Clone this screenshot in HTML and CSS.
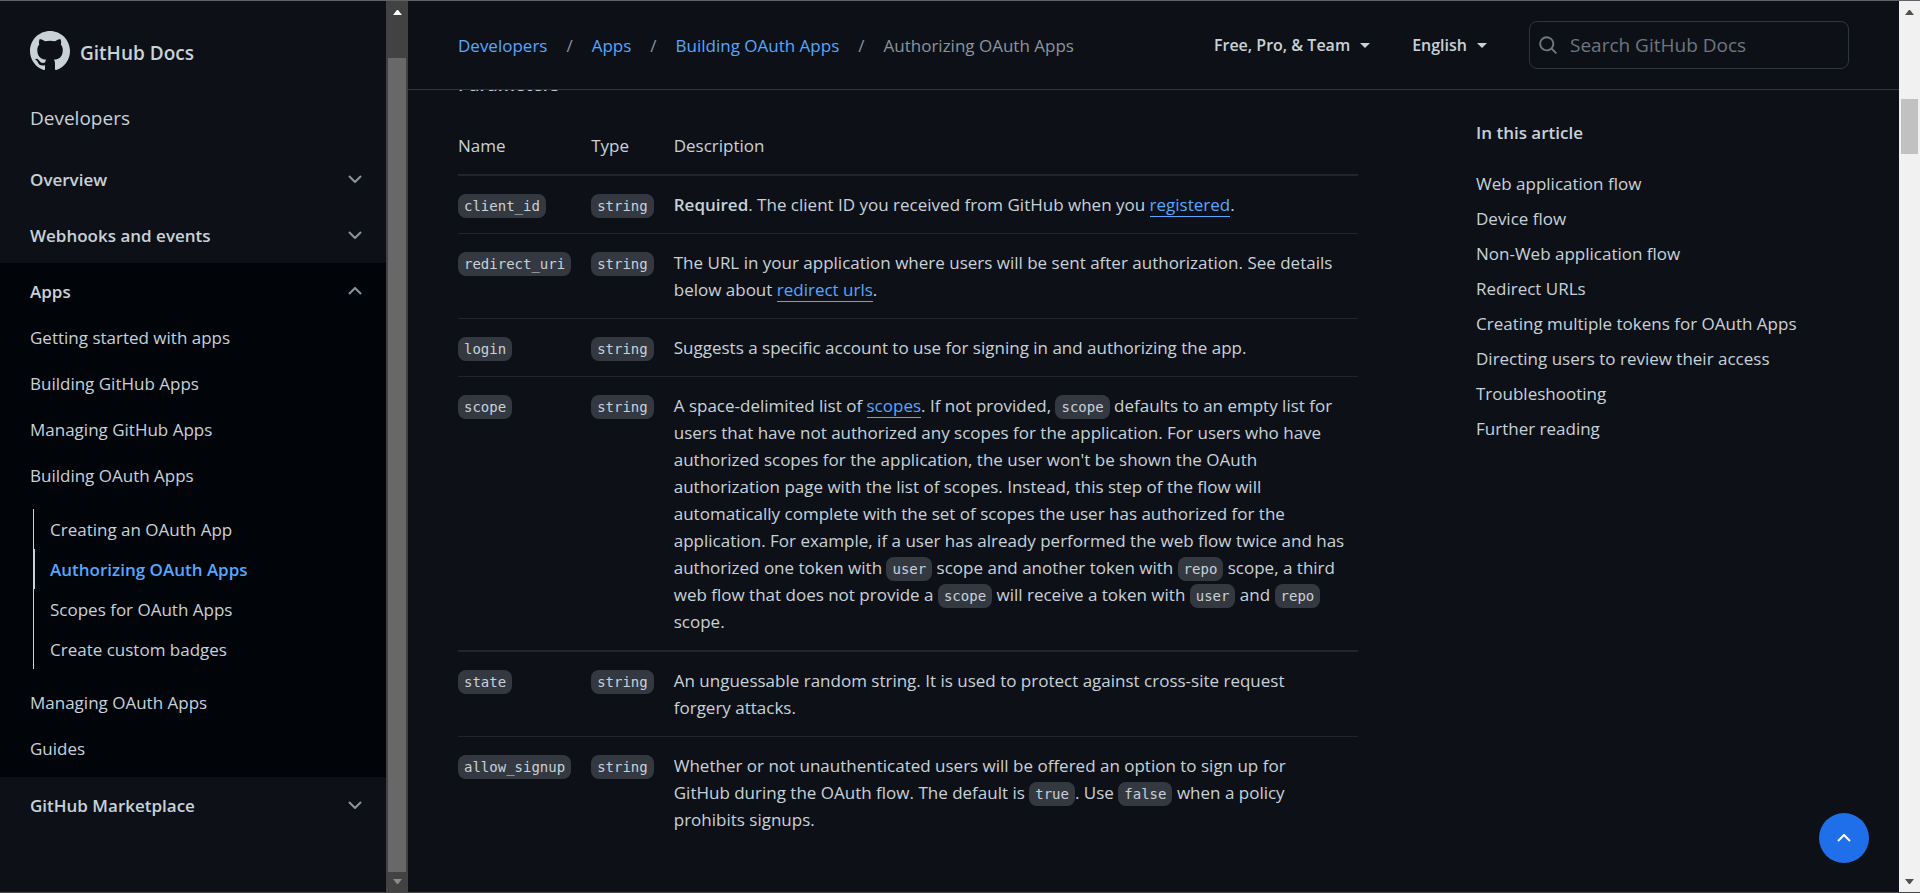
FILE: index.html
```html
<!DOCTYPE html>
<html lang="en">
<head>
<meta charset="utf-8">
<title>Authorizing OAuth Apps - GitHub Docs</title>
<link rel="stylesheet" href="styles.css">
</head>
<body>
<div class="app">
  <nav class="sidebar" aria-label="Docs">
    <a class="brand" href="#">
      <svg class="brand-mark" viewBox="0 0 16 16" aria-hidden="true"><path fill="currentColor" fill-rule="evenodd" d="M8 0C3.58 0 0 3.58 0 8c0 3.54 2.29 6.53 5.47 7.59.4.07.55-.17.55-.38 0-.19-.01-.82-.01-1.49-2.01.37-2.53-.49-2.69-.94-.09-.23-.48-.94-.82-1.13-.28-.15-.68-.52-.01-.53.63-.01 1.08.58 1.23.82.72 1.21 1.87.87 2.33.66.07-.52.28-.87.51-1.07-1.78-.2-3.64-.89-3.64-3.95 0-.87.31-1.59.82-2.15-.08-.2-.36-1.02.08-2.12 0 0 .67-.21 2.2.82.64-.18 1.32-.27 2-.27.68 0 1.36.09 2 .27 1.53-1.04 2.2-.82 2.2-.82.44 1.1.16 1.92.08 2.12.51.56.82 1.27.82 2.15 0 3.07-1.87 3.75-3.65 3.95.29.25.54.73.54 1.48 0 1.07-.01 1.93-.01 2.2 0 .21.15.46.55.38A8.013 8.013 0 0016 8c0-4.42-3.58-8-8-8z"/></svg>
      <span class="brand-name">GitHub Docs</span>
    </a>
    <a class="product" href="#">Developers</a>
    <button class="section" type="button" aria-expanded="false">Overview
      <svg class="chevron" viewBox="0 0 14 8" aria-hidden="true"><path d="M1 1l6 6 6-6"/></svg></button>
    <button class="section" type="button" aria-expanded="false">Webhooks and events
      <svg class="chevron" viewBox="0 0 14 8" aria-hidden="true"><path d="M1 1l6 6 6-6"/></svg></button>
    <div class="open-section">
      <button class="section" type="button" aria-expanded="true">Apps
        <svg class="chevron" viewBox="0 0 14 8" aria-hidden="true"><path d="M1 7l6-6 6 6"/></svg></button>
      <ul class="topics">
        <li><a href="#">Getting started with apps</a></li>
        <li><a href="#">Building GitHub Apps</a></li>
        <li><a href="#">Managing GitHub Apps</a></li>
        <li><a href="#">Building OAuth Apps</a>
          <ul class="articles">
            <li><a href="#">Creating an OAuth App</a></li>
            <li><a class="current" href="#" aria-current="page">Authorizing OAuth Apps</a></li>
            <li><a href="#">Scopes for OAuth Apps</a></li>
            <li><a href="#">Create custom badges</a></li>
          </ul>
        </li>
        <li><a href="#">Managing OAuth Apps</a></li>
        <li><a href="#">Guides</a></li>
      </ul>
    </div>
    <button class="section" type="button" aria-expanded="false">GitHub Marketplace
      <svg class="chevron" viewBox="0 0 14 8" aria-hidden="true"><path d="M1 1l6 6 6-6"/></svg></button>
  </nav>
  <div class="scrollbar scrollbar-dark" aria-hidden="true">
    <svg class="arrow" viewBox="0 0 9 5"><path d="M0 5h9L5 0H4z"/></svg>
    <div class="track"><div class="thumb"></div></div>
    <svg class="arrow arrow-end" viewBox="0 0 9 5"><path d="M0 0h9L5 5H4z"/></svg>
  </div>

  <div class="page">
    <header class="topbar">
      <ol class="crumbs">
        <li><a href="#">Developers</a></li>
        <li><a href="#">Apps</a></li>
        <li><a href="#">Building OAuth Apps</a></li>
        <li><a class="here" href="#">Authorizing OAuth Apps</a></li>
      </ol>
      <div class="tools">
        <button class="picker" type="button">Free, Pro, &amp; Team <span class="caret"></span></button>
        <button class="picker" type="button">English <span class="caret"></span></button>
        <label class="search">
          <svg class="search-icon" viewBox="0 0 16 16" aria-hidden="true"><path fill="currentColor" fill-rule="evenodd" d="M11.5 7a4.5 4.5 0 11-9 0 4.5 4.5 0 019 0zm-.82 4.74a6 6 0 111.06-1.06l3.04 3.04a.75.75 0 11-1.06 1.06l-3.04-3.04z"/></svg>
          <input type="search" placeholder="Search GitHub Docs" aria-label="Search GitHub Docs">
        </label>
      </div>
    </header>
    <div class="content">
      <main class="article">
        <h4 class="heading">Parameters</h4>
        <table class="params">
          <thead><tr><th>Name</th><th>Type</th><th>Description</th></tr></thead>
          <tbody>
            <tr><td><code>client_id</code></td><td><code>string</code></td><td><strong>Required</strong>. The client ID you received from GitHub when you <a href="#">registered</a>.</td></tr>
            <tr><td><code>redirect_uri</code></td><td><code>string</code></td><td>The URL in your application where users will be sent after authorization. See details below about <a href="#">redirect urls</a>.</td></tr>
            <tr><td><code>login</code></td><td><code>string</code></td><td>Suggests a specific account to use for signing in and authorizing the app.</td></tr>
            <tr><td><code>scope</code></td><td><code>string</code></td><td>A space-delimited list of <a href="#">scopes</a>. If not provided, <code>scope</code> defaults to an empty list for users that have not authorized any scopes for the application. For users who have authorized scopes for the application, the user won't be shown the OAuth authorization page with the list of scopes. Instead, this step of the flow will automatically complete with the set of scopes the user has authorized for the application. For example, if a user has already performed the web flow twice and has authorized one token with <code>user</code> scope and another token with <code>repo</code> scope, a third web flow that does not provide a <code>scope</code> will receive a token with <code>user</code> and <code>repo</code> scope.</td></tr>
            <tr class="divided"><td><code>state</code></td><td><code>string</code></td><td>An unguessable random string. It is used to protect against cross-site request<br>forgery attacks.</td></tr>
            <tr><td><code>allow_signup</code></td><td><code>string</code></td><td>Whether or not unauthenticated users will be offered an option to sign up for<br>GitHub during the OAuth flow. The default is <code>true</code>. Use <code>false</code> when a policy prohibits signups.</td></tr>
          </tbody>
        </table>
      </main>
      <aside class="toc">
        <h2>In this article</h2>
        <ul>
          <li><a href="#">Web application flow</a></li>
          <li><a href="#">Device flow</a></li>
          <li><a href="#">Non-Web application flow</a></li>
          <li><a href="#">Redirect URLs</a></li>
          <li><a href="#">Creating multiple tokens for OAuth Apps</a></li>
          <li><a href="#">Directing users to review their access</a></li>
          <li><a href="#">Troubleshooting</a></li>
          <li><a href="#">Further reading</a></li>
        </ul>
      </aside>
    </div>
    <button class="to-top" type="button" aria-label="Scroll to top">
      <svg viewBox="0 0 14 8" aria-hidden="true"><path d="M1 7l6-6 6 6"/></svg>
    </button>
  </div>
  <div class="scrollbar scrollbar-light" aria-hidden="true">
    <svg class="arrow" viewBox="0 0 9 5"><path d="M0 5h9L5 0H4z"/></svg>
    <div class="track"><div class="thumb"></div></div>
    <svg class="arrow arrow-end" viewBox="0 0 9 5"><path d="M0 0h9L5 5H4z"/></svg>
  </div>
</div>
</body>
</html>
```

FILE: styles.css
```css
:root {
  --bg: #0d1117;
  --text: #c9d1d9;
  --link: #58a6ff;
  --muted: #8b949e;
  --line: #30363d;
  --line-soft: #21262d;
}

* { box-sizing: border-box; }

body {
  margin: 0;
  background: var(--bg);
  color: var(--text);
  font: 17px/27px "Open Sans", "Noto Sans", sans-serif;
}

a { color: inherit; text-decoration: none; }
ul, ol { margin: 0; padding: 0; list-style: none; }
button { border: 0; background: none; color: inherit; font: inherit; cursor: pointer; }

.app {
  display: flex;
  height: 100vh;
  overflow: hidden;
  border-top: 1px solid #5f6368;
  border-bottom: 1px solid #4a4a4a;
}

/* Sidebar */
.sidebar { flex: none; width: 386px; overflow: hidden; }

.brand {
  display: flex;
  align-items: center;
  gap: 10px;
  margin: 30px 30px 0;
  font-size: 19px;
  font-weight: 600;
}
.brand-mark { width: 40px; height: 40px; }
.brand-name { padding-top: 4px; }

.product { display: block; margin: 32px 30px 18px; font-size: 19px; line-height: 30px; }

.section {
  display: flex;
  align-items: center;
  justify-content: space-between;
  width: 100%;
  height: 56px;
  padding: 0 24px 0 30px;
  font-weight: 600;
  text-align: left;
}
.chevron {
  width: 14px;
  height: 8px;
  fill: none;
  stroke: var(--muted);
  stroke-width: 2;
}

.open-section { background: #010409; padding-bottom: 1px; }
.topics > li > a { display: block; padding: 5px 30px 14px; }

.articles { margin: 6px 0 15px 33px; border-left: 1px solid var(--text); }
.articles a { display: block; height: 40px; padding: 7px 16px; }
.articles .current {
  padding-left: 15px;
  border-left: 1px solid var(--text);
  color: var(--link);
  font-weight: 600;
}

/* Scrollbars */
.scrollbar {
  display: flex;
  flex: none;
  flex-direction: column;
  align-items: center;
  padding: 9px 0 8px;
}
.arrow { width: 9px; height: 5px; fill: currentColor; }
.track { display: flex; flex: 1; flex-direction: column; align-self: stretch; padding: 0 2px; }

.scrollbar-dark { width: 22px; background: #424242; color: #fff; }
.scrollbar-dark .track { padding-top: 43px; padding-bottom: 7px; }
.scrollbar-dark .thumb { flex: 1; background: #686868; }
.scrollbar-dark .arrow-end { color: #8b8b8b; }

.scrollbar-light { width: 21px; background: #f1f1f1; color: #505050; }
.scrollbar-light .track { padding-top: 84px; }
.scrollbar-light .thumb { height: 55px; background: #c1c1c1; }

/* Page */
.page { position: relative; flex: 1; min-width: 0; overflow: hidden; }

.topbar {
  display: flex;
  align-items: center;
  justify-content: space-between;
  height: 89px;
  padding: 0 50px;
  border-bottom: 1px solid var(--line);
}
.crumbs { display: flex; }
.crumbs a { color: var(--link); }
.crumbs .here { color: var(--muted); }
.crumbs li + li::before { content: "/"; margin: 0 19px; color: var(--muted); }

.tools { display: flex; align-items: center; }
.picker {
  display: flex;
  align-items: center;
  gap: 10px;
  margin-right: 42px;
  padding: 0;
  font-size: 16px;
  font-weight: 600;
}
.caret { border: 5px solid transparent; border-top-color: currentColor; border-bottom: 0; }

.search {
  display: flex;
  align-items: center;
  gap: 12px;
  width: 320px;
  height: 48px;
  padding: 0 8px;
  border: 1px solid var(--line);
  border-radius: 8px;
}
.search-icon { flex: none; width: 20px; height: 20px; color: #6e7681; }
.search input {
  width: 100%;
  padding: 0;
  border: 0;
  outline: 0;
  background: none;
  color: var(--text);
  font: inherit;
  font-size: 19px;
}
.search input::placeholder { color: #6e7681; opacity: 1; }

.content {
  display: grid;
  grid-template-columns: minmax(0, 900px) minmax(0, 373px);
  justify-content: space-between;
  padding: 0 50px;
  overflow: hidden;
}

/* The heading is scrolled partly under the top bar */
.heading { margin: -18px 0 21px; font-size: 18px; font-weight: 600; line-height: 24px; }

.params { width: 100%; border-collapse: collapse; }
.params th, .params td { padding: 15px 20px 15px 0; text-align: left; vertical-align: top; }
.params td:last-child { padding-right: 12px; }
.params th { font-weight: 400; border-bottom: 2px solid var(--line-soft); }
.params tr + tr td { border-top: 1px solid var(--line-soft); }
.params .divided td { border-top-width: 2px; }
.params a { border-bottom: 1px solid; color: var(--link); }
.params strong { font-weight: 600; }
.params code {
  padding: 4px 6px;
  border-radius: 8px;
  background: #343941;
  font: 14px "DejaVu Sans Mono", monospace;
}

.toc { padding-top: 29px; }
.toc h2 { margin: 0 0 20px; font-size: 17px; font-weight: 600; }
.toc li { height: 35px; padding-top: 4px; }

.to-top {
  position: absolute;
  right: 30px;
  bottom: 29px;
  display: grid;
  place-items: center;
  width: 50px;
  height: 50px;
  border-radius: 50%;
  background: #1f6feb;
}
.to-top svg { width: 14px; height: 8px; fill: none; stroke: #fff; stroke-width: 2; }
```
